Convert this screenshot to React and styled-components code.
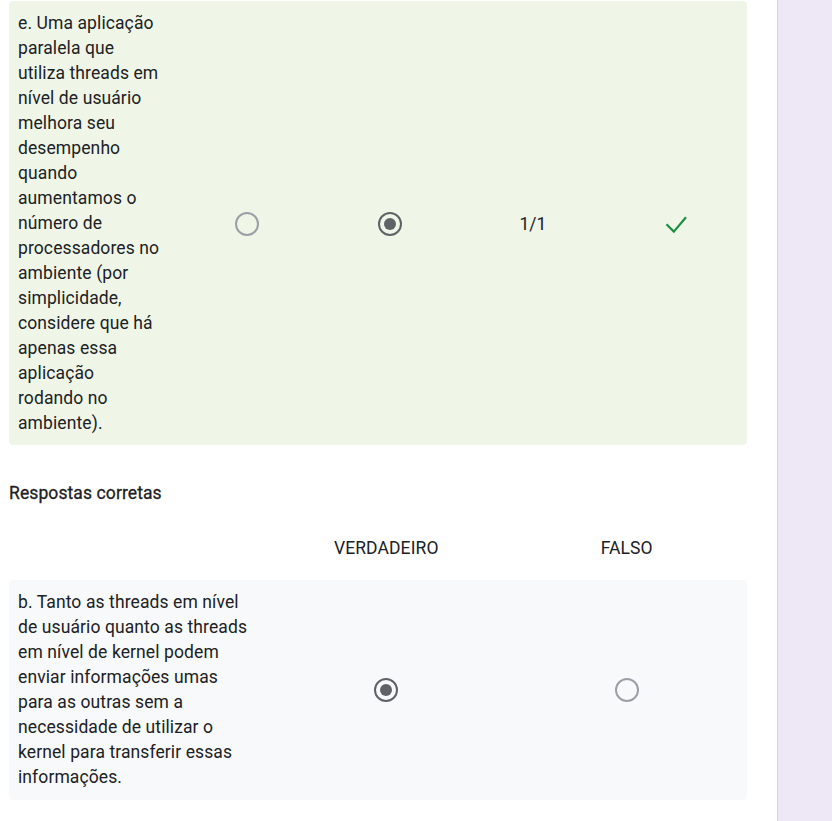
import React from 'react'
import styled, { createGlobalStyle } from 'styled-components'

const Global = createGlobalStyle`
  html, body {
    margin: 0;
    padding: 0;
    background: #fff;
  }
  body {
    font-family: Roboto, "Noto Sans", Arial, sans-serif;
    color: #202124;
  }
`

const question = 'e. Uma aplicação paralela que utiliza threads em nível de usuário melhora seu desempenho quando aumentamos o número de processadores no ambiente (por simplicidade, considere que há apenas essa aplicação rodando no ambiente).'

const correct = [
  {
    label: 'b. Tanto as threads em nível de usuário quanto as threads em nível de kernel podem enviar informações umas para as outras sem a necessidade de utilizar o kernel para transferir essas informações.',
    answer: 0,
  },
]

export default function App() {
  return (
    <>
      <Global />
      <Page>
        <Main>
          <AnswerRow>
            <Label>{question}</Label>
            <Cell><Radio /></Cell>
            <Cell><Radio checked /></Cell>
            <Cell>1/1</Cell>
            <Cell><Check /></Cell>
          </AnswerRow>

          <Title>Respostas corretas</Title>

          <HeaderRow>
            <div />
            <Cell>VERDADEIRO</Cell>
            <Cell>FALSO</Cell>
          </HeaderRow>

          {correct.map((row, i) => (
            <KeyRow key={i}>
              <Label>{row.label}</Label>
              <Cell><Radio checked={row.answer === 0} /></Cell>
              <Cell><Radio checked={row.answer === 1} /></Cell>
            </KeyRow>
          ))}
        </Main>
        <Side />
      </Page>
    </>
  )
}

const Check = () => (
  <svg width="24" height="24" viewBox="0 0 24 24">
    <polyline points="2.5,12.2 9.8,19.6 22,5.2" fill="none" stroke="#1e8e3e" strokeWidth="2.2" />
  </svg>
)

const Page = styled.div`
  display: flex;
  min-height: 821px;
`

const Main = styled.div`
  width: 777px;
  box-sizing: border-box;
  padding: 1px 30px 20px 9px;
`

const Side = styled.div`
  flex: 1;
  background: #ede7f6;
  border-left: 1px solid #d6d3dd;
`

const AnswerRow = styled.div`
  display: grid;
  grid-template-columns: 167px repeat(4, 1fr);
  align-items: center;
  background: #eff6e8;
  border-radius: 4px;
  padding: 10px 0 9px;
`

const KeyRow = styled.div`
  display: grid;
  grid-template-columns: 257px repeat(2, 1fr);
  align-items: center;
  background: #f8f9fa;
  border-radius: 4px;
  padding: 10px 0;
`

const HeaderRow = styled.div`
  display: grid;
  grid-template-columns: 257px repeat(2, 1fr);
  align-items: center;
  height: 48px;
  margin-top: 19px;
  margin-bottom: 8px;
  font-size: 17.5px;
  letter-spacing: 0.1px;
`

const Label = styled.div`
  padding: 0 14px 0 9px;
  font-size: 17.5px;
  line-height: 25px;
  letter-spacing: 0.1px;
`

const Cell = styled.div`
  display: flex;
  justify-content: center;
  align-items: center;
  font-size: 17.5px;
`

const Title = styled.div`
  margin-top: 36px;
  font-size: 17.5px;
  line-height: 24px;
  letter-spacing: 0.1px;
  -webkit-text-stroke: 0.3px #202124;
`

const Radio = styled.span`
  box-sizing: border-box;
  width: 24px;
  height: 24px;
  border-radius: 50%;
  border: 2px solid ${p => (p.checked ? '#5f6368' : '#9aa0a6')};
  display: flex;
  align-items: center;
  justify-content: center;
  &::after {
    content: '';
    width: 12px;
    height: 12px;
    border-radius: 50%;
    background: #5f6368;
    display: ${p => (p.checked ? 'block' : 'none')};
  }
`
